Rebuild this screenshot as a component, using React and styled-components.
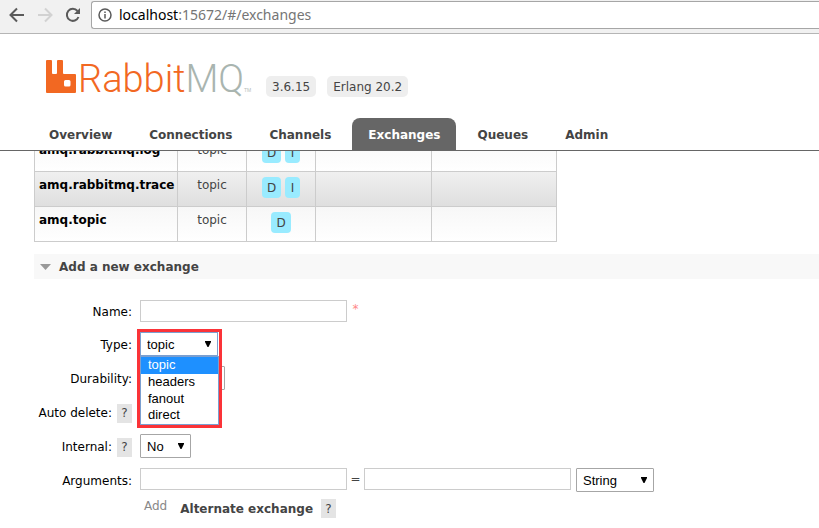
import React from "react";
import styled, { createGlobalStyle, css } from "styled-components";

const GlobalStyle = createGlobalStyle`
  *, *::before, *::after { box-sizing: border-box; }
  body {
    margin: 0;
    background: #fff;
    color: #444;
    font: 12px/16px Verdana, "DejaVu Sans", sans-serif;
    overflow: hidden;
  }
`;

const BrowserBar = styled.div`
  display: flex;
  align-items: center;
  height: 34px;
  padding: 1px 0 4px 9px;
  background: #f1f1f1;
  border-bottom: 1px solid #b5b5b5;
`;

const BarButton = styled.button`
  display: flex;
  width: 16px;
  height: 16px;
  margin-right: 12px;
  padding: 0;
  border: 0;
  background: none;
  color: ${(p) => (p.disabled ? "#d2d2d2" : "#5a5a5a")};
`;

const AddressBar = styled.div`
  flex: 1;
  display: flex;
  align-items: center;
  gap: 7px;
  height: 28px;
  margin-left: -2px;
  padding-left: 6px;
  border: 1px solid #a6a6a6;
  border-right: 0;
  border-radius: 3px 0 0 3px;
  background: #fff;
  color: #757575;
  font: 14px/20px "Noto Sans", sans-serif;
`;

const Host = styled.span`
  color: #000;
`;

const Header = styled.header`
  border-bottom: 1px solid #666;
`;

const Brand = styled.div`
  display: flex;
  align-items: flex-end;
  height: 84px;
  padding: 0 0 21px 46px;
`;

const LogoLink = styled.a`
  display: flex;
  align-items: flex-end;
  width: 220px;
  height: 38px;
  padding-bottom: 4px;
  color: #f26822;
  text-decoration: none;
`;

const Wordmark = styled.span`
  margin-left: 1px;
  font: 300 38px/28px "Roboto", sans-serif;
`;

const WordmarkTail = styled.span`
  color: #a9b5b0;
`;

const Trademark = styled.span`
  color: #b4beba;
  font: 5px/6px "Liberation Sans", sans-serif;
`;

const Version = styled.span`
  margin-right: 11px;
  padding: 3px 6px 2px;
  border-radius: 5px;
  background: #eee;
`;

const Tabs = styled.nav`
  display: flex;
  gap: 5px;
  padding-left: 33px;
`;

const Tab = styled.a`
  padding: 9px 16px 7px;
  border-radius: 8px 8px 0 0;
  color: #444;
  font-weight: bold;
  text-decoration: none;
  ${(p) =>
    p.$active &&
    css`
      background: #666;
      color: #fff;
    `}
`;

const Main = styled.main`
  padding-left: 34px;
  overflow: hidden;
`;

const ExchangeTable = styled.table`
  table-layout: fixed;
  width: 523px;
  margin-top: -15px;
  border-collapse: collapse;
`;

const Col = styled.col`
  width: ${(p) => p.$w}px;
`;

const Row = styled.tr`
  height: 35px;
  background: ${(p) =>
    p.$alt
      ? "linear-gradient(#f0f0f0, #dedede)"
      : "linear-gradient(#f7f7f7, #fff)"};
`;

const Cell = styled.td`
  padding: 5px 4px;
  border: 1px solid #ccc;
  text-align: center;
  vertical-align: top;
`;

const NameCell = styled(Cell)`
  text-align: left;
`;

const ExchangeLink = styled.a`
  color: #000;
  font-weight: bold;
  text-decoration: none;
`;

const Flags = styled.div`
  display: flex;
  justify-content: center;
  gap: 4px;
`;

const Flag = styled.abbr`
  min-width: 15px;
  padding: 3px 5px 2px;
  border-radius: 4px;
  background: #99ebff;
`;

const SectionTitle = styled.h2`
  display: flex;
  align-items: center;
  gap: 8px;
  height: 25px;
  margin: 12px 0 0;
  padding-left: 6px;
  background: #f8f8f8;
  font-size: 12px;
`;

const Form = styled.form`
  display: grid;
  grid-template-columns: 98px 1fr;
  gap: 10px 8px;
  padding-top: 21px;
  color: #000;
`;

const LabelCell = styled.div`
  display: flex;
  align-items: center;
  justify-content: flex-end;
  gap: 5px;
  padding-top: 2px;
  white-space: nowrap;
`;

const Field = styled.div`
  position: relative;
  display: flex;
  align-items: flex-start;
`;

const Help = styled.button`
  width: 15px;
  height: 19px;
  padding: 0;
  border: 0;
  background: #e4e4e4;
  color: #444;
  font: inherit;
`;

const TextInput = styled.input`
  width: 207px;
  height: 22px;
  padding: 3px;
  border: 1px solid #ccc;
  font: 13px "Liberation Sans", sans-serif;
`;

const Mark = styled.span`
  width: 17px;
  text-align: center;
  color: ${(p) => (p.$required ? "#f88" : "#444")};
  line-height: ${(p) => (p.$required ? 18 : 22)}px;
`;

const SelectWrap = styled.span`
  position: relative;
  display: flex;
  width: ${(p) => p.$w}px;
  margin-left: ${(p) => p.$gap || 0}px;
`;

const SelectBox = styled.select`
  appearance: none;
  width: 100%;
  height: 24px;
  padding: 0 6px;
  border: 1px solid ${(p) => (p.$open ? "#7b9fd0" : "#a6a6a6")};
  border-radius: ${(p) => (p.$open ? 0 : 1)}px;
  background: #fff;
  color: #000;
  font: 13px "Liberation Sans", sans-serif;
`;

const Arrow = styled.svg`
  position: absolute;
  top: 9px;
  right: 7px;
  pointer-events: none;
`;

const Highlight = styled.div`
  position: absolute;
  z-index: 1;
  top: -3px;
  left: -3px;
  padding-top: 24px;
  border: 3px solid #fb3338;
`;

const OptionList = styled.ul`
  display: flex;
  flex-direction: column;
  width: 79px;
  height: 69px;
  margin: 0;
  padding: 0;
  border: 1px solid #7b9fd0;
  background: #fff;
  list-style: none;
  font: 13px/16px "Liberation Sans", sans-serif;
`;

const OptionItem = styled.li`
  flex: 1;
  padding-left: 7px;
  ${(p) =>
    p.$selected &&
    css`
      background: #1e90ff;
      color: #fff;
    `}
`;

const Shortcuts = styled.div`
  grid-column: 2;
  display: flex;
  align-items: center;
  gap: 8px;
  margin-top: -4px;
  padding-left: 4px;
  color: #888;
`;

const AddText = styled.span`
  padding-bottom: 5px;
`;

const ShortcutName = styled.b`
  margin-left: 5px;
  color: #444;
`;

function Select({ id, label, options, w, gap, open }) {
  return (
    <SelectWrap $w={w} $gap={gap}>
      <SelectBox id={id} aria-label={label} $open={open}>
        {options.map((o) => (
          <option key={o}>{o}</option>
        ))}
      </SelectBox>
      <Arrow width="6" height="6" viewBox="0 0 6 6" aria-hidden="true">
        <path d="M0 0h6v1L3.500 6h-1L0 1z" fill="#000" />
      </Arrow>
    </SelectWrap>
  );
}

function FormLabel({ htmlFor, help, children }) {
  return (
    <LabelCell>
      <label htmlFor={htmlFor}>{children}:</label>
      {help && <Help type="button">?</Help>}
    </LabelCell>
  );
}

function RabbitIcon() {
  return (
    <svg width="31" height="33" viewBox="0 0 31 33" aria-hidden="true">
      <path
        fill="#f26822"
        fillRule="evenodd"
        d="M1 0h4q1 0 1 1v12q0 1 1 1h3q1 0 1-1V1q0-1 1-1h4q1 0 1 1v12q0 1 1 1h11q1 0 1 1V32q0 1-1 1H1q-1 0-1-1V1q0-1 1-1zM19.500 20q-1.500 0-1.500 1.500v3.500q0 1.500 1.500 1.500h3.500q1.500 0 1.500-1.500v-3.500q0-1.500-1.500-1.500z"
      />
    </svg>
  );
}

const arrowStroke = { fill: "none", stroke: "currentColor", strokeWidth: 2 };
const tabs = ["Overview", "Connections", "Channels", "Exchanges", "Queues", "Admin"];
const exchanges = [
  { name: "amq.rabbitmq.log", flags: ["D", "I"] },
  { name: "amq.rabbitmq.trace", flags: ["D", "I"] },
  { name: "amq.topic", flags: ["D"] },
];
const types = ["topic", "headers", "fanout", "direct"];

export default function App() {
  return (
    <>
      <GlobalStyle />
      <BrowserBar>
        <BarButton aria-label="Back">
          <svg width="16" height="16" viewBox="0 0 16 16">
            <path d="M15 8H2M8 1.500L1.500 8L8 14.500" {...arrowStroke} />
          </svg>
        </BarButton>
        <BarButton aria-label="Forward" disabled>
          <svg width="16" height="16" viewBox="0 0 16 16">
            <path d="M1 8h13M8 1.500L14.500 8L8 14.500" {...arrowStroke} />
          </svg>
        </BarButton>
        <BarButton aria-label="Reload">
          <svg width="16" height="16" viewBox="0 0 16 16">
            <path d="M13.500 10A6 6 0 1 1 12.500 4" {...arrowStroke} />
            <path d="M15 1v6H9z" fill="currentColor" />
          </svg>
        </BarButton>
        <AddressBar>
          <svg width="14" height="14" viewBox="0 0 14 14" aria-hidden="true">
            <circle cx="7" cy="7" r="6" fill="none" stroke="#5a5a5a" strokeWidth="1.500" />
            <path d="M7 6v4.500M7 3.500v1.500" stroke="#5a5a5a" strokeWidth="1.500" />
          </svg>
          <span>
            <Host>localhost</Host>:15672/#/exchanges
          </span>
        </AddressBar>
      </BrowserBar>

      <Header>
        <Brand>
          <LogoLink href="#/">
            <RabbitIcon />
            <Wordmark>
              Rabbit<WordmarkTail>MQ</WordmarkTail>
            </Wordmark>
            <Trademark>TM</Trademark>
          </LogoLink>
          <Version>3.6.15</Version>
          <Version>Erlang 20.2</Version>
        </Brand>
        <Tabs>
          {tabs.map((t) => (
            <Tab key={t} href={`#/${t.toLowerCase()}`} $active={t === "Exchanges"}>
              {t}
            </Tab>
          ))}
        </Tabs>
      </Header>

      <Main>
        <ExchangeTable>
          <colgroup>
            <Col $w={143} />
            <Col $w={69} />
            <Col $w={69} />
            <Col $w={116} />
            <Col $w={125} />
          </colgroup>
          <tbody>
            {exchanges.map((e, i) => (
              <Row key={e.name} $alt={i % 2 === 1}>
                <NameCell>
                  <ExchangeLink href={`#/exchanges/${e.name}`}>{e.name}</ExchangeLink>
                </NameCell>
                <Cell>topic</Cell>
                <Cell>
                  <Flags>
                    {e.flags.map((f) => (
                      <Flag key={f}>{f}</Flag>
                    ))}
                  </Flags>
                </Cell>
                <Cell />
                <Cell />
              </Row>
            ))}
          </tbody>
        </ExchangeTable>

        <SectionTitle>
          <svg width="11" height="6" viewBox="0 0 11 6" aria-hidden="true">
            <path d="M0 0h11L5.500 6z" fill="#999" />
          </svg>
          Add a new exchange
        </SectionTitle>

        <Form>
          <FormLabel htmlFor="name">Name</FormLabel>
          <Field>
            <TextInput id="name" type="text" />
            <Mark $required>*</Mark>
          </Field>

          <FormLabel htmlFor="type">Type</FormLabel>
          <Field>
            <Select id="type" options={types} w={78} open />
            <Highlight>
              <OptionList role="listbox" aria-label="Type">
                {types.map((t) => (
                  <OptionItem key={t} role="option" $selected={t === "topic"}>
                    {t}
                  </OptionItem>
                ))}
              </OptionList>
            </Highlight>
          </Field>

          <FormLabel htmlFor="durability">Durability</FormLabel>
          <Field>
            <Select id="durability" options={["Durable", "Transient"]} w={85} />
          </Field>

          <FormLabel htmlFor="auto-delete" help>Auto delete</FormLabel>
          <Field>
            <Select id="auto-delete" options={["No", "Yes"]} w={51} />
          </Field>

          <FormLabel htmlFor="internal" help>Internal</FormLabel>
          <Field>
            <Select id="internal" options={["No", "Yes"]} w={51} />
          </Field>

          <FormLabel htmlFor="arguments">Arguments</FormLabel>
          <Field>
            <TextInput id="arguments" type="text" />
            <Mark>=</Mark>
            <TextInput type="text" aria-label="Argument value" />
            <Select
              label="Argument type"
              options={["String", "Number", "Boolean", "List"]}
              w={78}
              gap={5}
            />
          </Field>

          <Shortcuts>
            <AddText>Add</AddText>
            <ShortcutName>Alternate exchange</ShortcutName>
            <Help type="button">?</Help>
          </Shortcuts>
        </Form>
      </Main>
    </>
  );
}
